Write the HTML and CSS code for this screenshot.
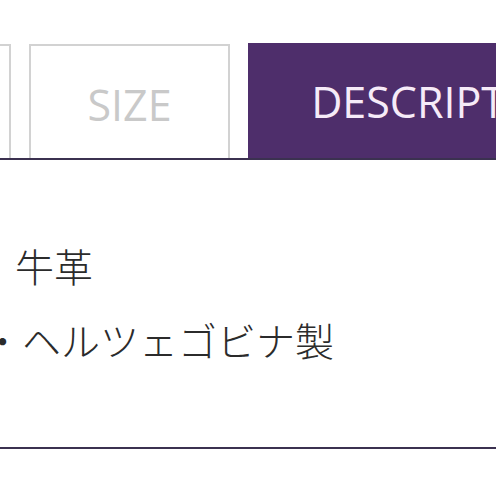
FILE: index.html
```html
<!DOCTYPE html>
<html lang="ja">
<head>
<meta charset="utf-8">
<link rel="stylesheet" href="styles.css">
</head>
<body>
<div class="page">
  <div class="tabs">
    <div class="tab">DETAIL</div>
    <div class="tab">SIZE</div>
    <div class="tab active">DESCRIPTION</div>
  </div>
  <div class="desc">
    <p class="line first">牛革</p>
    <p class="line second">・ヘルツェゴビナ製</p>
  </div>
</div>
</body>
</html>
```

FILE: styles.css
```css
html, body {
  margin: 0;
  padding: 0;
  background: #ffffff;
  overflow: hidden;
}
.page {
  width: 496px;
  height: 496px;
  overflow: hidden;
}
.tabs {
  display: flex;
  align-items: flex-end;
  gap: 18px;
  margin-left: -190px;
  padding-top: 43px;
  border-bottom: 2px solid #3b3150;
  width: 1100px;
}
.tab {
  flex: 0 0 201px;
  box-sizing: border-box;
  height: 114px;
  border: 2px solid #d2d2d2;
  border-bottom: none;
  display: flex;
  align-items: center;
  justify-content: center;
  padding-top: 4px;
  font-family: "Open Sans", "Noto Sans", sans-serif;
  font-size: 43px;
  color: #c9c9c9;
  white-space: nowrap;
  overflow: hidden;
}
.tab.active {
  flex: 0 0 398px;
  height: 115px;
  border: none;
  background: #4e2e6b;
  color: #f6ebf8;
  padding-top: 2px;
}
.desc {
  padding: 68px 0 71px;
  border-bottom: 2px solid #3b3150;
  font-family: "Noto Sans CJK JP", "Noto Sans", sans-serif;
  font-weight: 300;
  font-size: 39px;
  line-height: 74px;
  color: #2b2b2b;
}
.line {
  margin: 0;
  white-space: nowrap;
}
.first {
  padding-left: 15px;
}
.second {
  margin-left: -17px;
}
```
